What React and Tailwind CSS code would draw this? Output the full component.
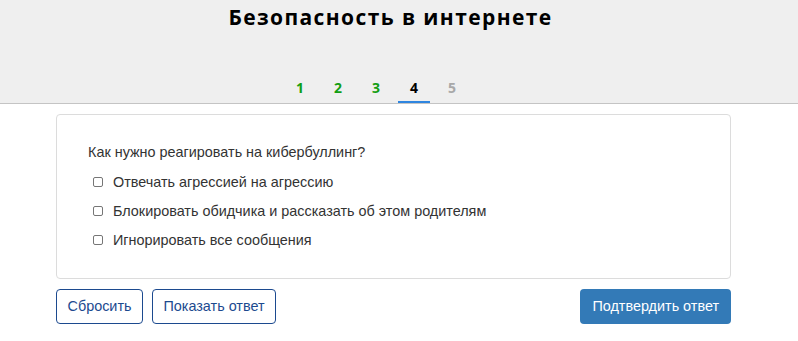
import React from "react";

const steps = [
  { n: 1, state: "done" },
  { n: 2, state: "done" },
  { n: 3, state: "done" },
  { n: 4, state: "active" },
  { n: 5, state: "todo" },
];

const options = [
  "Отвечать агрессией на агрессию",
  "Блокировать обидчика и рассказать об этом родителям",
  "Игнорировать все сообщения",
];

export default function App() {
  return (
    <div className="w-[798px] h-[341px] bg-white overflow-hidden font-['Liberation_Sans',Arial,sans-serif]">
      <header className="h-[104px] bg-[#efefef] border-b border-[#c4c4c4] flex flex-col">
        <h1 className="w-[781px] text-center mt-[3px] text-[21px] leading-[28px] font-bold tracking-[1.4px] text-black font-['Open_Sans',sans-serif]">
          Безопасность в интернете
        </h1>
        <nav className="mt-auto flex gap-[6px] pl-[284px]">
          {steps.map((s) => (
            <div
              key={s.n}
              className={
                "w-[32px] h-[25px] flex justify-center text-[14px] leading-[20px] font-bold font-['Open_Sans',sans-serif] border-b-2 " +
                (s.state === "active"
                  ? "border-[#2f86e0] text-black"
                  : s.state === "done"
                  ? "border-transparent text-[#139e13]"
                  : "border-transparent text-[#a8a8a8]")
              }
            >
              {s.n}
            </div>
          ))}
        </nav>
      </header>

      <main className="w-[675px] ml-[56px] pt-[10px]">
        <section className="h-[165px] border border-[#dcdcdc] rounded-[4px] pl-[31px] pt-[27px] text-[14.4px] text-[#333]">
          <p className="leading-[20px] mb-[10px]">Как нужно реагировать на кибербуллинг?</p>
          {options.map((o) => (
            <label key={o} className="flex items-center h-[20px] mb-[9px] pl-[5px]">
              <span className="w-[10px] h-[10px] border border-[#767676] rounded-[2px] bg-white mr-[10px]" />
              <span className="leading-[20px]">{o}</span>
            </label>
          ))}
        </section>

        <div className="mt-[10px] flex items-center text-[14.4px]">
          <button className="h-[35px] px-[10.5px] border border-[#1c4a8f] rounded-[4px] text-[#1c4a8f] bg-white">
            Сбросить
          </button>
          <button className="ml-[9px] h-[35px] px-[10.5px] border border-[#1c4a8f] rounded-[4px] text-[#1c4a8f] bg-white">
            Показать ответ
          </button>
          <button className="ml-auto h-[35px] px-[12px] rounded-[4px] bg-[#337ab7] text-white">
            Подтвердить ответ
          </button>
        </div>
      </main>
    </div>
  );
}
